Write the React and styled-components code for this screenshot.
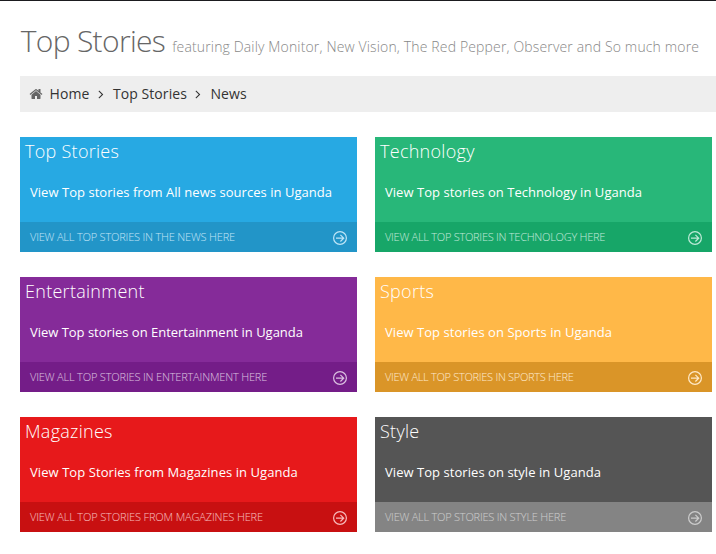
import React from 'react';

import styled, { createGlobalStyle } from 'styled-components';


const GlobalStyle = createGlobalStyle`
    body {
        margin: 0;
        background: #fff;
        color: #000;
        font-family: "Open Sans", sans-serif;
        font-size: 13px;
        line-height: 20px;
        overflow: hidden;
    }
`;

const Page = styled.div`
    box-sizing: border-box;
    height: 554px;
    border-top: 1px solid #1b1b1f;
    padding: 20px 0 0 20px;
`;

const Title = styled.h3`
    height: 40px;
    margin: 0 0 15px;
    padding-left: .7px;
    color: #666;
    font-size: 30px;
    font-weight: 300;
    line-height: 40px;
    letter-spacing: -.68px;
    white-space: nowrap;
`;

const Subtitle = styled.small`
    color: #888;
    font-size: 14px;
    font-weight: 300;
    line-height: 20px;
    letter-spacing: .15px;
`;

const Breadcrumb = styled.ul`
    display: flex;
    align-items: center;
    box-sizing: border-box;
    height: 36px;
    margin: 0 0 25px;
    padding: 0 9px;
    background: #eee;
    list-style: none;
`;

const Crumb = styled.li`
    display: flex;
    align-items: center;
`;

const CrumbLink = styled.a`
    color: #333;
    font-size: 14px;
    line-height: 20px;
    letter-spacing: .08px;
`;

const HomeIcon = styled.svg`
    width: 14px;
    height: 14px;
    margin-right: 6.5px;
    fill: #666;
`;

const AngleIcon = styled.svg`
    width: 14px;
    height: 14px;
    margin: 0 5px 0 4.5px;
    fill: #333;
`;

const Grid = styled.div`
    display: grid;
    grid-template-columns: 337px 337px;
    gap: 25px 18px;
`;

const Card = styled.div`
    display: flex;
    flex-direction: column;
    height: 115px;
    background: ${props => props.$color};
    color: #fff;
`;

const CardHeading = styled.div`
    padding-left: 5px;
    font-size: 18px;
    font-weight: 300;
    line-height: 28px;
    letter-spacing: .28px;
`;

const CardText = styled.div`
    flex: 1;
    padding: 17px 10px 0;
    letter-spacing: ${props => props.$tracking}px;
    white-space: nowrap;
`;

const More = styled.a`
    display: flex;
    align-items: center;
    justify-content: space-between;
    height: 30px;
    padding: 0 10px;
    background: ${props => props.$color};
    font-size: 11px;
    font-weight: 300;
    letter-spacing: ${props => props.$tracking}px;
    text-transform: uppercase;
    opacity: .7;
`;

const ArrowIcon = styled.svg`
    width: 14px;
    height: 14px;
    margin-top: 2px;
    fill: none;
    stroke: #fff;
    stroke-width: 1.2;
`;

// tracking: letter spacing of the text and of the link below it
const cards = [
    { title: 'Top Stories', text: 'View Top stories from All news sources in Uganda', more: 'View all top stories in the news here', color: '#27a9e3', dark: '#208dbe', tracking: [.04, -.19] },
    { title: 'Technology', text: 'View Top stories on Technology in Uganda', more: 'View all top stories in Technology here', color: '#28b779', dark: '#10a062', tracking: [.04, -.26] },
    { title: 'Entertainment', text: 'View Top stories on Entertainment in Uganda', more: 'View all top stories in Entertainment here', color: '#852b99', dark: '#6e1881', tracking: [-.02, -.17] },
    { title: 'Sports', text: 'View Top stories on Sports in Uganda', more: 'View all top stories in Sports here', color: '#ffb848', dark: '#cb871b', tracking: [.05, -.29] },
    { title: 'Magazines', text: 'View Top Stories from Magazines in Uganda', more: 'View all top stories from Magazines here', color: '#e7191b', dark: '#bc0d0e', tracking: [.07, -.14] },
    { title: 'Style', text: 'View Top stories on style in Uganda', more: 'View all top stories in style here', color: '#555', dark: '#999', tracking: [.05, -.23] }
];

const Angle = () => (
    <AngleIcon viewBox="0 0 1792 1792">
        <path d="M1171 960q0 13-10 23l-466 466q-10 10-23 10t-23-10l-50-50q-10-10-10-23t10-23l393-393-393-393q-10-10-10-23t10-23l50-50q10-10 23-10t23 10l466 466q10 10 10 23z" />
    </AngleIcon>
);

const StoryCard = ({ title, text, more, color, dark, tracking }) => (
    <Card $color={color}>
        <CardHeading>{title}</CardHeading>
        <CardText $tracking={tracking[0]}>{text}</CardText>
        <More $color={dark} $tracking={tracking[1]}>
            {more}
            <ArrowIcon viewBox="0 0 14 14">
                <circle cx="7" cy="7" r="6.4" />
                <path d="M3 7.2h8M7.4 3.9l3.3 3.3-3.3 3.3" />
            </ArrowIcon>
        </More>
    </Card>
);

const App = () => (
    <Page>
        <GlobalStyle />
        <Title>
            Top Stories <Subtitle>featuring Daily Monitor, New Vision, The Red Pepper, Observer and So much more</Subtitle>
        </Title>
        <Breadcrumb>
            <Crumb>
                <HomeIcon viewBox="0 0 1792 1792">
                    <path d="M1472 992v480q0 26-19 45t-45 19h-384v-384h-256v384h-384q-26 0-45-19t-19-45v-480q0-1 .5-3t.5-3l575-474 575 474q1 2 1 6zm223-69l-62 74q-8 9-21 11h-3q-13 0-21-7l-692-577-692 577q-12 8-24 7-13-2-21-11l-62-74q-8-10-7-23.5t11-21.5l719-599q32-26 76-26t76 26l244 204v-195q0-14 9-23t23-9h192q14 0 23 9t9 23v408l219 182q10 8 11 21.5t-7 23.5z" />
                </HomeIcon>
                <CrumbLink>Home</CrumbLink>
                <Angle />
            </Crumb>
            <Crumb>
                <CrumbLink>Top Stories</CrumbLink>
                <Angle />
            </Crumb>
            <Crumb>
                <CrumbLink>News</CrumbLink>
            </Crumb>
        </Breadcrumb>
        <Grid>
            {cards.map(card => <StoryCard key={card.title} {...card} />)}
        </Grid>
    </Page>
);

export default App;
